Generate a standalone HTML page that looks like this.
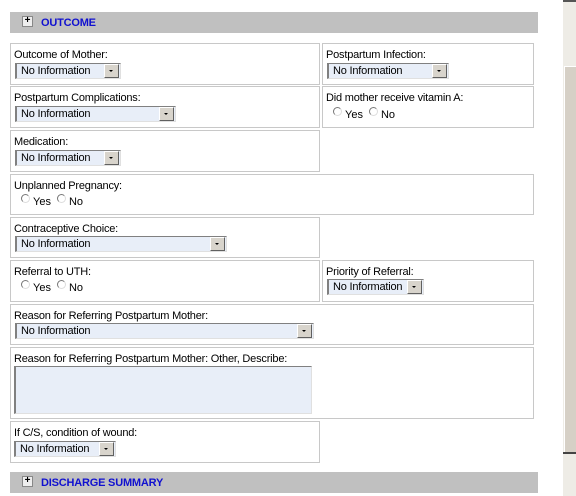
<!DOCTYPE html>
<html><head><meta charset="utf-8"><style>
*{box-sizing:border-box;margin:0;padding:0}
body{width:576px;height:496px;background:#fff;position:relative;overflow:hidden;font-family:"Liberation Sans",sans-serif;font-size:11px;color:#000}
.bar{position:absolute;left:10px;width:528px;height:21px;background:#c0c0c0}
.bar .pl{position:absolute;left:12px;top:4px;width:11px;height:11px;border:1px solid #888;background:#eee;font-size:10px;line-height:8px;text-align:center;font-weight:bold}
.bar .t{position:absolute;left:31px;top:5px;color:#1010d0;font-weight:bold;font-size:11px;letter-spacing:-0.2px}
.box{position:absolute;border:1px solid #c8c8c8;background:#fff}
.lbl{position:absolute;left:3px;top:5px;white-space:nowrap;letter-spacing:-0.2px}
.sel{position:absolute;height:16px;background:#e8eef8;border-top:1px solid #808080;border-left:2px solid #808080;border-bottom:1px solid #e0e0e0;border-right:1px solid #e0e0e0;padding-left:4px;line-height:14px;letter-spacing:-0.2px}
.sel b{position:absolute;right:1px;top:0px;width:15px;height:14px;background:#d8d4cc;border:1px solid #fff;border-right-color:#606060;border-bottom-color:#606060}
.sel b:after{content:"";position:absolute;left:4px;top:5px;border-left:2px solid transparent;border-right:2px solid transparent;border-top:2px solid #000}
.rad{position:absolute;white-space:nowrap;font-size:11px}
.rad i{display:inline-block;width:9px;height:9px;border-radius:50%;border:1px solid #777;border-bottom-color:#ddd;border-right-color:#ddd;margin-right:3px;vertical-align:0px}
.rad span{margin-right:6px;position:relative;top:2px}
</style></head><body>
<div class="bar" style="top:12px"><div class="pl">+</div><div class="t">OUTCOME</div></div>

<div class="box" style="left:10px;top:43px;width:310px;height:42px"><div class="lbl">Outcome of Mother:</div><div class="sel" style="left:4px;top:19px;width:106px">No Information<b></b></div></div>
<div class="box" style="left:322px;top:43px;width:212px;height:42px"><div class="lbl">Postpartum Infection:</div><div class="sel" style="left:4px;top:19px;width:122px">No Information<b></b></div></div>

<div class="box" style="left:10px;top:86px;width:310px;height:42px"><div class="lbl">Postpartum Complications:</div><div class="sel" style="left:4px;top:19px;width:161px">No Information<b></b></div></div>
<div class="box" style="left:322px;top:86px;width:212px;height:42px"><div class="lbl">Did mother receive vitamin A:</div><div class="rad" style="left:10px;top:20px"><i></i><span>Yes</span><i></i><span>No</span></div></div>

<div class="box" style="left:10px;top:130px;width:310px;height:42px"><div class="lbl">Medication:</div><div class="sel" style="left:4px;top:19px;width:106px">No Information<b></b></div></div>

<div class="box" style="left:10px;top:174px;width:524px;height:41px"><div class="lbl">Unplanned Pregnancy:</div><div class="rad" style="left:10px;top:19px"><i></i><span>Yes</span><i></i><span>No</span></div></div>

<div class="box" style="left:10px;top:217px;width:310px;height:41px"><div class="lbl">Contraceptive Choice:</div><div class="sel" style="left:4px;top:18px;width:212px">No Information<b></b></div></div>

<div class="box" style="left:10px;top:260px;width:310px;height:42px"><div class="lbl">Referral to UTH:</div><div class="rad" style="left:10px;top:19px"><i></i><span>Yes</span><i></i><span>No</span></div></div>
<div class="box" style="left:322px;top:260px;width:212px;height:42px"><div class="lbl">Priority of Referral:</div><div class="sel" style="left:4px;top:18px;width:97px">No Information<b></b></div></div>

<div class="box" style="left:10px;top:304px;width:524px;height:41px"><div class="lbl">Reason for Referring Postpartum Mother:</div><div class="sel" style="left:4px;top:18px;width:299px">No Information<b></b></div></div>

<div class="box" style="left:10px;top:347px;width:524px;height:72px"><div class="lbl">Reason for Referring Postpartum Mother: Other, Describe:</div><div class="sel" style="left:3px;top:18px;width:298px;height:48px;background:#e8eef8"></div></div>

<div class="box" style="left:10px;top:421px;width:310px;height:42px"><div class="lbl">If C/S, condition of wound:</div><div class="sel" style="left:3px;top:19px;width:102px">No Information<b></b></div></div>

<div class="bar" style="top:472px"><div class="pl">+</div><div class="t">DISCHARGE SUMMARY</div></div>

<div style="position:absolute;left:563px;top:0;width:13px;height:496px;background:#eeece6"></div>
<div style="position:absolute;left:563px;top:0;width:13px;height:2px;background:#555"></div>
<div style="position:absolute;left:564px;top:66px;width:12px;height:386px;background:#d6d0c6;border-left:1px solid #fff;border-top:1px solid #fff"></div>
<div style="position:absolute;left:563px;top:452px;width:13px;height:2px;background:#444"></div>
</body></html>
